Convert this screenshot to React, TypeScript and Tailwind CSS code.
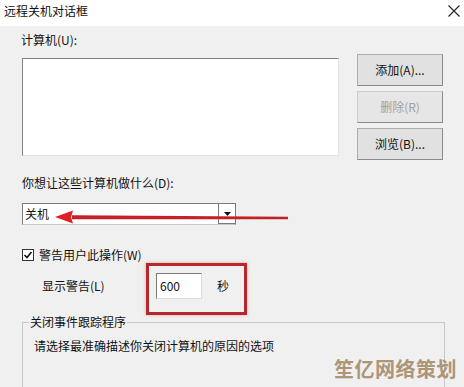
import React from "react";

const font = { fontFamily: '"Microsoft YaHei", "Noto Sans CJK SC", "Noto Sans", sans-serif' };

function Btn({ children, disabled }: { children: React.ReactNode; disabled?: boolean }) {
  return (
    <div
      className={`w-[86px] h-[32px] flex items-center justify-center bg-[#e1e1e1] border border-[#adadad] border-b-[#8a8a8a] border-r-[#8a8a8a] text-[12px] ${
        disabled ? "text-[#a0a0a0] bg-[#e6e6e6] border-[#cccccc]" : "text-[#111]"
      }`}
    >
      {children}
    </div>
  );
}

export default function App() {
  return (
    <div className="relative w-[464px] h-[387px] overflow-hidden bg-[#f0f0f0] flex flex-col text-[#111]" style={font}>
      <div className="h-[26px] bg-white flex items-center justify-between pl-[4px] pr-[2px] shrink-0">
        <span className="text-[12px] leading-[16px] -mt-[4px]">远程关机对话框</span>
        <svg width="16" height="16" viewBox="0 0 16 16" className="-mt-[4px]">
          <path d="M2.5 2.5 L13.5 13.5 M13.5 2.5 L2.5 13.5" stroke="#222" strokeWidth="1.1" fill="none" />
        </svg>
      </div>
      <div className="flex flex-col pl-[22px] pr-[20px]">
        <div className="text-[12px] leading-[16px] mt-[6px] -ml-[1px]">计算机(U):</div>
        <div className="flex mt-[6px]">
          <div className="w-[317px] h-[98px] mt-[4px] bg-white border border-[#828282] border-r-[#e3e3e3] border-b-[#e3e3e3]" />
          <div className="ml-[18px] flex flex-col gap-[5px]">
            <Btn>添加(A)...</Btn>
            <Btn disabled>删除(R)</Btn>
            <Btn>浏览(B)...</Btn>
          </div>
        </div>
        <div className="text-[12px] leading-[16px] mt-[15px]">你想让这些计算机做什么(D):</div>
        <div className="mt-[12px] w-[214px] h-[22px] bg-white border border-[#7a7a7a] border-b-[#c8c8c8] flex items-center">
          <span className="flex-1 text-[12px] leading-[16px] pl-[2px]">关机</span>
          <div className="w-[17px] h-[20px] border-l border-b border-[#7a7a7a] flex items-center justify-center">
            <svg width="7" height="4" viewBox="0 0 7 4">
              <path d="M0 0 L7 0 L3.5 4 Z" fill="#111" />
            </svg>
          </div>
        </div>
        <div className="mt-[22px] flex items-center h-[16px]">
          <div className="w-[12px] h-[12px] bg-white border border-[#333] flex items-center justify-center">
            <svg width="10" height="10" viewBox="0 0 10 10">
              <path d="M1.5 5 L4 7.5 L8.5 2" stroke="#111" strokeWidth="1.6" fill="none" />
            </svg>
          </div>
          <span className="ml-[5px] text-[12px] leading-[16px]">警告用户此操作(W)</span>
        </div>
        <div className="mt-[10px] flex items-center h-[26px] pl-[20px]">
          <span className="w-[114px] text-[12px] leading-[16px]">显示警告(L)</span>
          <div className="w-[46px] h-[26px] bg-white border border-[#7a7a7a] border-r-[#dcdcdc] border-b-[#dcdcdc] flex items-center pl-[3px] text-[12px]">
            600
          </div>
          <span className="ml-[15px] text-[12px] leading-[16px]">秒</span>
        </div>
        <fieldset className="mt-[15px] w-[423px] h-[120px] border border-[#c8c8c8]">
          <legend className="ml-[6px] px-[1px] text-[12px] leading-[16px]">关闭事件跟踪程序</legend>
          <div className="pl-[11px] mt-[8px] text-[12px] leading-[16px]">请选择最准确描述你关闭计算机的原因的选项</div>
        </fieldset>
      </div>

      {/* annotations */}
      <svg className="absolute left-0 top-0 pointer-events-none" width="464" height="387" viewBox="0 0 464 387">
        <path d="M72 215.3 L288 216.8 L288 219.3 L72 219.3 Z" fill="#c42026" />
        <path d="M55 217 L73 210.5 L71 217.3 L73 223.5 Z" fill="#dd2026" />
      </svg>
      <div className="absolute left-[146px] top-[263px] w-[101px] h-[52px] border-[3px] border-[#b5282d] shadow-[0_0_3px_rgba(220,80,80,0.5)] pointer-events-none" />
      <div className="absolute left-[334px] top-[357px] text-[20px] leading-[24px] font-bold text-[#a78c6c] opacity-90 tracking-[0.5px]" style={font}>
        笙亿网络策划
      </div>
    </div>
  );
}
